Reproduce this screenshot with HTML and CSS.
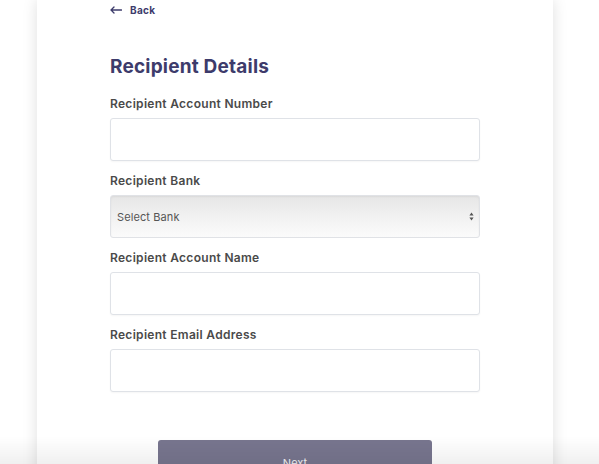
FILE: index.html
```html
<!DOCTYPE html>
<html lang="en">
<head>
<meta charset="utf-8">
<title>Recipient Details</title>
<link rel="stylesheet" href="styles.css">
</head>
<body>
<div class="page">
  <main class="card">
    <a class="back" href="#">
      <svg class="back-icon" width="12" height="8" viewBox="0 0 12 8" aria-hidden="true">
        <path d="M11.5 4H1.2M4 1L1 4l3 3" fill="none" stroke="currentColor" stroke-width="1.3" stroke-linecap="round" stroke-linejoin="round"/>
      </svg>
      <span>Back</span>
    </a>
    <h1 class="title">Recipient Details</h1>
    <form class="form">
      <div class="field">
        <label class="label">Recipient Account Number</label>
        <input class="input" type="text">
      </div>
      <div class="field">
        <label class="label">Recipient Bank</label>
        <div class="select">
          <span class="select-text">Select Bank</span>
          <svg class="select-arrows" width="5" height="9" viewBox="0 0 5 9" aria-hidden="true">
            <path d="M2.5 0.5L4.6 3.6H0.4Z M2.5 8.5L4.6 5.4H0.4Z" fill="#555"/>
          </svg>
        </div>
      </div>
      <div class="field">
        <label class="label">Recipient Account Name</label>
        <input class="input" type="text">
      </div>
      <div class="field">
        <label class="label">Recipient Email Address</label>
        <input class="input" type="text">
      </div>
      <div class="actions">
        <button class="btn" type="button">Next</button>
      </div>
    </form>
  </main>
</div>
<div class="bottom-fade"></div>
</body>
</html>
```
FILE: styles.css
```css
* { box-sizing: border-box; }
html, body { margin: 0; padding: 0; }
body {
  background: #ffffff;
  font-family: "Inter", "Open Sans", sans-serif;
  overflow: hidden;
  height: 464px;
}
.page {
  display: flex;
  padding-left: 37px;
  height: 464px;
}
.card {
  width: 516px;
  min-height: 520px;
  background: #ffffff;
  box-shadow: 0 0 14px rgba(0, 0, 0, 0.13);
  padding: 0 73px;
}
.back {
  display: flex;
  align-items: center;
  gap: 8px;
  height: 20px;
  color: #3d3b6b;
  text-decoration: none;
  font-size: 10px;
  font-weight: 700;
  letter-spacing: 0.3px;
}
.back-icon { display: block; }
.title {
  margin: 34px 0 0;
  font-size: 19px;
  line-height: 26px;
  font-weight: 700;
  color: #3d3b6b;
  letter-spacing: 0.2px;
}
.form {
  margin-top: 16px;
  display: flex;
  flex-direction: column;
  gap: 12px;
}
.field {
  display: flex;
  flex-direction: column;
  gap: 7px;
}
.label {
  font-size: 12px;
  line-height: 15px;
  font-weight: 600;
  color: #4a4a4a;
  letter-spacing: 0.3px;
}
.input {
  display: block;
  width: 370px;
  height: 43px;
  border: 1px solid #dfe2e7;
  border-radius: 3px;
  background: #fff;
  box-shadow: 0 1px 2px rgba(0, 0, 0, 0.04);
  font: inherit;
}
.select {
  width: 370px;
  height: 43px;
  border: 1px solid #e0e2e6;
  border-radius: 3px;
  background: linear-gradient(to bottom, #e6e6e6 0%, #f0f0f0 45%, #fbfbfb 100%);
  box-shadow: inset 0 1px 2px rgba(0, 0, 0, 0.06);
  display: flex;
  align-items: center;
  justify-content: space-between;
  padding: 0 5px 0 6px;
}
.select-text {
  font-size: 11px;
  color: #555;
  letter-spacing: 0.1px;
}
.select-arrows { display: block; }
.actions {
  display: flex;
  justify-content: center;
  margin-top: 36px;
}
.btn {
  width: 274px;
  height: 42px;
  border: none;
  border-radius: 3px;
  background: #78768f;
  color: #f3f3f6;
  font: inherit;
  font-size: 11px;
  padding-top: 4px;
}
.bottom-fade {
  position: fixed;
  left: 0;
  right: 0;
  bottom: 0;
  height: 28px;
  background: linear-gradient(to bottom, rgba(0, 0, 0, 0), rgba(0, 0, 0, 0.06));
  pointer-events: none;
}
```
